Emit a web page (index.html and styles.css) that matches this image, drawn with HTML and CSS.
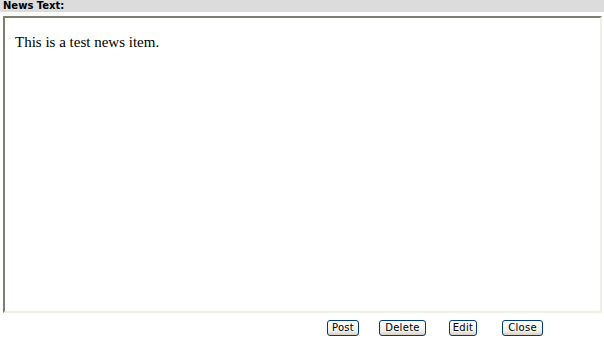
FILE: index.html
```html
<!doctype html>
<html lang="en">
  <head>
    <meta charset="UTF-8" />
    <title>News Text</title>
    <link rel="stylesheet" href="styles.css">
  </head>
  <body>
    <div class="label-bar">News Text:</div>

    <div class="news-box">This is a test news item.</div>

    <div class="actions">
      <button type="button" class="btn btn-post">Post</button>
      <button type="button" class="btn btn-delete">Delete</button>
      <button type="button" class="btn btn-edit">Edit</button>
      <button type="button" class="btn btn-close">Close</button>
    </div>
  </body>
</html>
```

FILE: styles.css
```css
body {
  margin: 0;
  background: white;
  font-family: "DejaVu Sans", Verdana, sans-serif;
}
.label-bar {
  background: #dcdcdc;
  height: 12px;
  line-height: 12px;
  padding-left: 3px;
  font-size: 10px;
  font-weight: bold;
  color: #000;
}
.news-box {
  box-sizing: border-box;
  margin: 4px 2px 0 3px;
  height: 297px;
  padding: 16px 10px;
  border-top: 2px solid #7d7d70;
  border-left: 2px solid #7d7d70;
  border-right: 2px solid #f1efe2;
  border-bottom: 2px solid #f1efe2;
  font-family: "Liberation Serif", "Times New Roman", serif;
  font-size: 15px;
  line-height: 17px;
  color: #000;
}
.actions {
  display: flex;
  padding: 7px 0 0 327px;
}
.btn {
  box-sizing: border-box;
  height: 16px;
  padding: 0;
  border: 1px solid #003c74;
  border-radius: 3px;
  background: linear-gradient(#ffffff, #f0f0ea 70%, #d6d0c5);
  font-family: "DejaVu Sans", Verdana, sans-serif;
  font-size: 10px;
  letter-spacing: 0.3px;
  color: #000;
  line-height: 14px;
}
.btn-post {
  width: 32px;
}
.btn-delete {
  margin-left: 20px;
  width: 47px;
}
.btn-edit {
  margin-left: 23px;
  width: 28px;
}
.btn-close {
  margin-left: 25px;
  width: 41px;
}
```
